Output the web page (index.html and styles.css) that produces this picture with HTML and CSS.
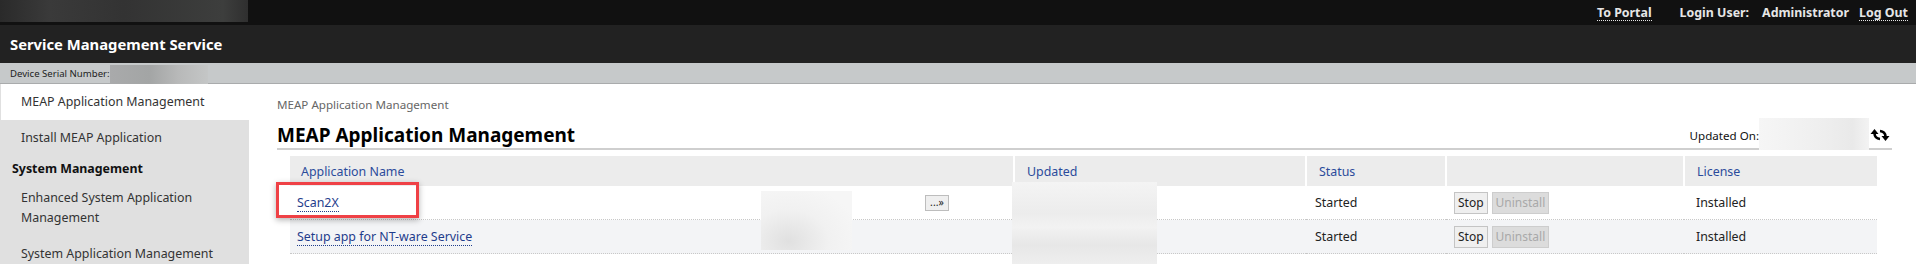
FILE: index.html
```html
<!DOCTYPE html>
<html lang="en">
<head>
    <meta charset="UTF-8">
    <title>Service Management Service</title>
    <link rel="stylesheet" href="styles.css">
</head>
<body>
    <div class="topbar">
        <div class="top-blur"></div>
        <div class="top-links">
            <a href="#" class="top-link portal">To Portal</a>
            <span class="login-label">Login User:</span>
            <span class="login-user">Administrator</span>
            <a href="#" class="top-link">Log Out</a>
        </div>
    </div>
    <div class="titlebar">Service Management Service</div>
    <div class="serialbar">
        <span>Device Serial Number:</span>
        <div class="serial-blur"></div>
    </div>

    <div class="page">
        <div class="sidebar">
            <div class="nav-item active">MEAP Application Management</div>
            <div class="nav-item">Install MEAP Application</div>
            <div class="nav-head">System Management</div>
            <div class="nav-item">Enhanced System Application Management</div>
            <div class="nav-item">System Application Management</div>
        </div>

        <div class="main">
            <div class="crumb">MEAP Application Management</div>
            <div class="heading">
                <h1>MEAP Application Management</h1>
                <div class="updated-on">
                    <span>Updated On:</span>
                    <div class="date-blur"></div>
                    <svg class="refresh" width="20" height="16" viewBox="0 0 20 16">
                        <polygon points="0.5,7 4.5,2 8.5,7" fill="#000"/>
                        <path d="M4.5 6.5 Q4.8 11.5 10 12" stroke="#000" stroke-width="2.6" fill="none"/>
                        <polygon points="11.5,9 15.5,14 19.5,9" fill="#000"/>
                        <path d="M15.5 9.5 Q15.2 4.5 10 4" stroke="#000" stroke-width="2.6" fill="none"/>
                    </svg>
                </div>
            </div>

            <div class="table-wrap">
                <table class="apps">
                    <thead>
                        <tr>
                            <th class="c-name">Application Name</th>
                            <th class="c-upd">Updated</th>
                            <th class="c-status">Status</th>
                            <th class="c-act"></th>
                            <th class="c-lic">License</th>
                        </tr>
                    </thead>
                    <tbody>
                        <tr>
                            <td class="name-cell">
                                <div class="name-inner">
                                    <a href="#" class="app-link">Scan2X</a>
                                    <button class="more">...&raquo;</button>
                                </div>
                            </td>
                            <td></td>
                            <td class="status">Started</td>
                            <td class="actions"><button class="btn">Stop</button><button class="btn" disabled>Uninstall</button></td>
                            <td class="lic">Installed</td>
                        </tr>
                        <tr class="alt">
                            <td class="name-cell">
                                <div class="name-inner">
                                    <a href="#" class="app-link">Setup app for NT-ware Service</a>
                                </div>
                            </td>
                            <td></td>
                            <td class="status">Started</td>
                            <td class="actions"><button class="btn">Stop</button><button class="btn" disabled>Uninstall</button></td>
                            <td class="lic">Installed</td>
                        </tr>
                        <tr>
                            <td class="name-cell"></td>
                            <td></td>
                            <td class="status"></td>
                            <td class="actions"><button class="btn stub"></button><button class="btn stub wide" disabled></button></td>
                            <td class="lic"></td>
                        </tr>
                    </tbody>
                </table>
                <!-- redacted areas and the annotation box -->
                <div class="blur-id"></div>
                <div class="blur-upd"></div>
                <div class="callout"></div>
            </div>
        </div>
    </div>
</body>
</html>
```

FILE: styles.css
```css
body {
    margin: 0;
    font-family: "Noto Sans", "Open Sans", sans-serif;
    font-size: 12.4px;
    color: #222;
    background: #fff;
    overflow: hidden;
}
a {
    text-decoration: none;
}
.topbar {
    height: 25px;
    background: #111;
    display: flex;
    justify-content: space-between;
}
.top-blur {
    width: 248px;
    height: 22px;
    background: linear-gradient(90deg, #2a2a2a, #3a3a3a 20%, #333 50%, #3d3e3d 90%, #2f2f2f);
}
.top-links {
    display: flex;
    align-items: center;
    padding-right: 8px;
    font-weight: bold;
    font-size: 12.4px;
    color: #e6e6e6;
}
.top-link {
    color: #e6e6e6;
    border-bottom: 1px dotted #e6e6e6;
    line-height: 15px;
}
.portal {
    margin-right: 28px;
}
.login-label {
    margin-right: 13px;
}
.login-user {
    margin-right: 10px;
}
.titlebar {
    height: 38px;
    background: #222;
    color: #fff;
    font-weight: bold;
    font-size: 14.8px;
    line-height: 38px;
    padding-left: 10px;
    box-sizing: border-box;
}
.serialbar {
    height: 21px;
    background: #c6c9ca;
    border-bottom: 1px solid #a9abac;
    box-sizing: border-box;
    display: flex;
    align-items: center;
    padding-left: 10px;
    font-size: 9.6px;
    color: #222;
}
.serial-blur {
    width: 98px;
    height: 22px;
    margin-top: 2px;
    align-self: flex-start;
    background: linear-gradient(90deg, #a9aaab, #a3a5a5 40%, #b8b9b9 70%, #c4c6c6);
}
.page {
    display: flex;
}
.sidebar {
    width: 249px;
    flex: none;
    background: #e0e0e0;
    min-height: 200px;
    border-left: 1px solid #e0e0e0;
    box-sizing: border-box;
}
.nav-item {
    padding: 8px 20px;
    line-height: 20px;
    color: #333;
}
.nav-item.active {
    background: #fff;
}
.nav-head {
    padding: 5px 11px 3px;
    line-height: 16px;
    font-weight: bold;
    color: #111;
}
.main {
    flex: 1;
    padding: 12px 24px 0 28px;
}
.crumb {
    color: #666;
    font-size: 11.6px;
    line-height: 18px;
}
.heading {
    display: flex;
    justify-content: space-between;
    align-items: flex-end;
    border-bottom: 2px solid #cfcfcf;
    margin-top: 8px;
    height: 26px;
}
h1 {
    margin: 0;
    font-size: 19px;
    line-height: 26px;
    color: #000;
}
.updated-on {
    display: flex;
    align-items: center;
    font-size: 11.6px;
    color: #111;
    height: 26px;
}
.date-blur {
    width: 110px;
    height: 32px;
    margin: -4px 0 -2px;
    background: linear-gradient(90deg, #f6f6f6, #eeeeee 60%, #e9e9e9 85%, #f3f3f3);
}
.refresh {
    margin: 0 2px 0 1px;
}
.table-wrap {
    position: relative;
    margin: 6px 0 0 13px;
    width: 1587px;
}
.apps {
    border-collapse: collapse;
    width: 1587px;
    table-layout: fixed;
}
.apps th {
    box-sizing: border-box;
    background: #ececec;
    color: #2b4b9b;
    font-weight: normal;
    text-align: left;
    height: 30px;
    padding: 0 0 0 12px;
    border-left: 2px solid #fff;
}
.apps thead tr {
    height: 30px;
}
.apps th:first-child {
    border-left: none;
    padding-left: 11px;
}
.c-name { width: 724px; }
.c-upd { width: 292px; }
.c-status { width: 140px; }
.c-act { width: 238px; }
.c-lic { width: 193px; }
.apps td {
    height: 33px;
    padding: 0;
    border-bottom: 1px dotted #c8c8c8;
    color: #222;
}
.apps tr.alt td {
    background: #f3f4f6;
}
.name-inner {
    display: flex;
    justify-content: space-between;
    align-items: center;
    padding: 0 65px 0 7px;
}
.app-link {
    color: #1f3d8c;
    border-bottom: 1px dotted #1f3d8c;
    line-height: 17px;
}
.more {
    font-family: inherit;
    font-size: 10.5px;
    line-height: 13px;
    padding: 0 3px;
    height: 16px;
    width: 24px;
    background: #efefef;
    border: 1px solid #bdbdbd;
    color: #222;
}
.status {
    padding-left: 9px !important;
}
.actions {
    padding-left: 8px !important;
}
.lic {
    padding-left: 12px !important;
}
.btn {
    font-family: inherit;
    font-size: 12px;
    height: 22px;
    padding: 0 3px;
    margin-right: 4px;
    background: #efefef;
    border: 1px solid #c4c4c4;
    color: #222;
    vertical-align: middle;
}
.btn:disabled {
    background: #dcdcdc;
    color: #a9a9a9;
    border-color: #cdcdcd;
}
.stub {
    width: 33px;
    margin-top: 16px;
}
.stub.wide {
    width: 54px;
}
.blur-id {
    position: absolute;
    left: 471px;
    top: 35px;
    width: 91px;
    height: 59px;
    background: radial-gradient(ellipse at 30% 85%, #e0e0e0, #f1f1f1 45%, #f6f6f6 80%);
}
.blur-upd {
    position: absolute;
    left: 722px;
    top: 26px;
    width: 145px;
    height: 90px;
    background: linear-gradient(180deg, #f4f4f4, #ececec 35%, #f2f2f2 50%, #e7e7e7 70%, #f1f1f1);
}
.callout {
    position: absolute;
    left: -14px;
    top: 26px;
    width: 143px;
    height: 36px;
    box-sizing: border-box;
    border: 3px solid #ef4146;
    box-shadow: 0 2px 6px rgba(0, 0, 0, 0.3);
}
```
